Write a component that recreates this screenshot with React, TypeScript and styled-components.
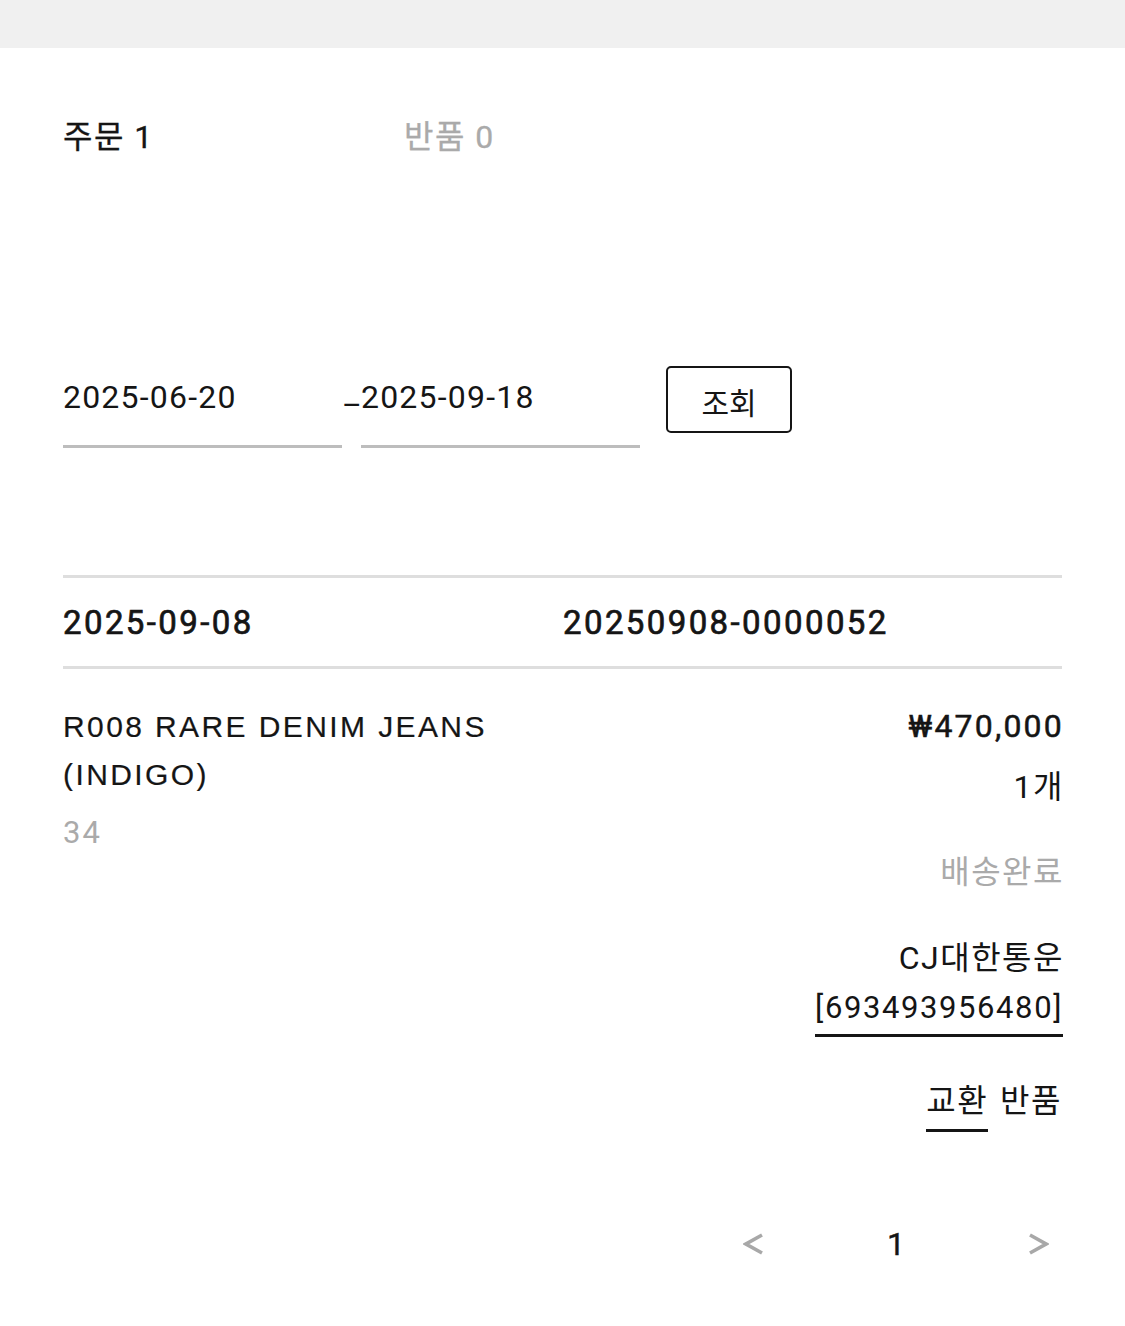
import styled, { createGlobalStyle } from "styled-components";

const GlobalStyle = createGlobalStyle`
  html, body {
    margin: 0;
    padding: 0;
    background: #ffffff;
  }
  body {
    font-family: Roboto, "Noto Sans CJK KR", sans-serif;
    color: #151515;
    letter-spacing: 2px;
  }
  * {
    box-sizing: border-box;
  }
`;

const TopBar = styled.div`
  height: 48px;
  background: #f0f0f0;
`;

const Page = styled.div`
  padding: 0 63px 60px;
`;

const Tabs = styled.div`
  display: flex;
  margin-top: 68px;
`;

const Tab = styled.div<{ $active?: boolean }>`
  width: 341px;
  font-size: 32px;
  line-height: 42px;
  letter-spacing: 1.5px;
  color: ${(p) => (p.$active ? "#151515" : "#aaaaaa")};
  -webkit-text-stroke: 0.3px ${(p) => (p.$active ? "#151515" : "#aaaaaa")};
`;

const Search = styled.div`
  display: flex;
  align-items: flex-start;
  margin-top: 208px;
`;

const DateField = styled.div`
  width: 279px;
  margin-top: 9px;
  padding-bottom: 26px;
  border-bottom: 3px solid #bdbdbd;
  font-size: 32px;
  line-height: 44px;
  letter-spacing: 1.2px;
`;

const Dash = styled.span`
  width: 19px;
  margin-top: 17px;
  font-size: 30px;
  line-height: 44px;
  letter-spacing: 0;
  text-align: center;
`;

const SearchButton = styled.button`
  width: 126px;
  height: 67px;
  margin-left: 26px;
  border: 2px solid #151515;
  border-radius: 5px;
  background: #ffffff;
  font-family: inherit;
  font-size: 30px;
  color: #151515;
  letter-spacing: 0;
  padding: 0;
  padding-top: 2px;
`;

const OrderHead = styled.div`
  display: flex;
  align-items: center;
  height: 94px;
  margin-top: 127px;
  border-top: 3px solid #dedede;
  border-bottom: 3px solid #dedede;
  font-size: 33px;
  font-weight: 400;
  letter-spacing: 2.4px;
  -webkit-text-stroke: 0.7px #151515;
`;

const OrderDate = styled.span`
  width: 500px;
`;

const Item = styled.div`
  display: flex;
  justify-content: space-between;
  padding-top: 34px;
`;

const ItemInfo = styled.div`
  display: flex;
  flex-direction: column;
`;

const ItemName = styled.div`
  font-family: "Liberation Sans", Roboto, sans-serif;
  font-size: 30px;
  line-height: 48px;
  letter-spacing: 2.4px;
  -webkit-text-stroke: 0.2px #151515;
`;

const ItemOption = styled.div`
  margin-top: 14px;
  font-size: 31px;
  line-height: 40px;
  color: #aaaaaa;
`;

const ItemSide = styled.div`
  display: flex;
  flex-direction: column;
  align-items: flex-end;
  text-align: right;
  padding-top: 3px;
`;

const SideLine = styled.div<{ $gap?: number; $muted?: boolean; $size?: number }>`
  margin-top: ${(p) => p.$gap ?? 0}px;
  font-size: ${(p) => p.$size ?? 32}px;
  line-height: 40px;
  letter-spacing: 1.5px;
  color: ${(p) => (p.$muted ? "#aaaaaa" : "#151515")};
  margin-right: -2px;
`;

const Price = styled(SideLine)`
  letter-spacing: 2.2px;
  -webkit-text-stroke: 0.5px #151515;
`;

const Tracking = styled.a`
  display: block;
  margin-top: 10px;
  padding-bottom: 6px;
  border-bottom: 3px solid #151515;
  font-size: 31px;
  line-height: 40px;
  letter-spacing: 1.6px;
  color: #151515;
  text-decoration: none;
  margin-right: -1px;
`;

const Actions = styled.div`
  display: flex;
  gap: 12px;
  margin-top: 44px;
  font-size: 32px;
  line-height: 40px;
  letter-spacing: 1.5px;
`;

const Action = styled.span<{ $underline?: boolean }>`
  padding-bottom: 8px;
  border-bottom: 3px solid ${(p) => (p.$underline ? "#151515" : "transparent")};
`;

const Pager = styled.div`
  display: flex;
  justify-content: flex-end;
  align-items: center;
  gap: 94px;
  margin-top: 90px;
  height: 44px;
`;

const PageItem = styled.span`
  display: flex;
  justify-content: center;
  align-items: center;
  width: 48px;
  font-size: 32px;
  line-height: 44px;
  letter-spacing: 0;
  color: #151515;
  -webkit-text-stroke: 0.4px #151515;
`;

const Chevron = ({ dir }: { dir: "left" | "right" }) => (
  <svg width="22" height="24" viewBox="0 0 22 24" fill="none">
    <polyline
      points={dir === "left" ? "19,3 3,12 19,21" : "3,3 19,12 3,21"}
      stroke="#a8a8a8"
      strokeWidth="3.6"
      strokeLinejoin="miter"
    />
  </svg>
);

export default function App() {
  return (
    <>
      <GlobalStyle />
      <TopBar />
      <Page>
        <Tabs>
          <Tab $active>주문 1</Tab>
          <Tab>반품 0</Tab>
        </Tabs>

        <Search>
          <DateField>2025-06-20</DateField>
          <Dash>–</Dash>
          <DateField>2025-09-18</DateField>
          <SearchButton>조회</SearchButton>
        </Search>

        <OrderHead>
          <OrderDate>2025-09-08</OrderDate>
          <span>20250908-0000052</span>
        </OrderHead>

        <Item>
          <ItemInfo>
            <ItemName>
              R008 RARE DENIM JEANS
              <br />
              (INDIGO)
            </ItemName>
            <ItemOption>34</ItemOption>
          </ItemInfo>
          <ItemSide>
            <Price $size={32}>₩470,000</Price>
            <SideLine $gap={21}>1개</SideLine>
            <SideLine $gap={45} $muted>배송완료</SideLine>
            <SideLine $gap={46}>CJ대한통운</SideLine>
            <Tracking href="#">[693493956480]</Tracking>
            <Actions>
              <Action $underline>교환</Action>
              <Action>반품</Action>
            </Actions>
          </ItemSide>
        </Item>

        <Pager>
          <PageItem>
            <Chevron dir="left" />
          </PageItem>
          <PageItem>1</PageItem>
          <PageItem>
            <Chevron dir="right" />
          </PageItem>
        </Pager>
      </Page>
    </>
  );
}
